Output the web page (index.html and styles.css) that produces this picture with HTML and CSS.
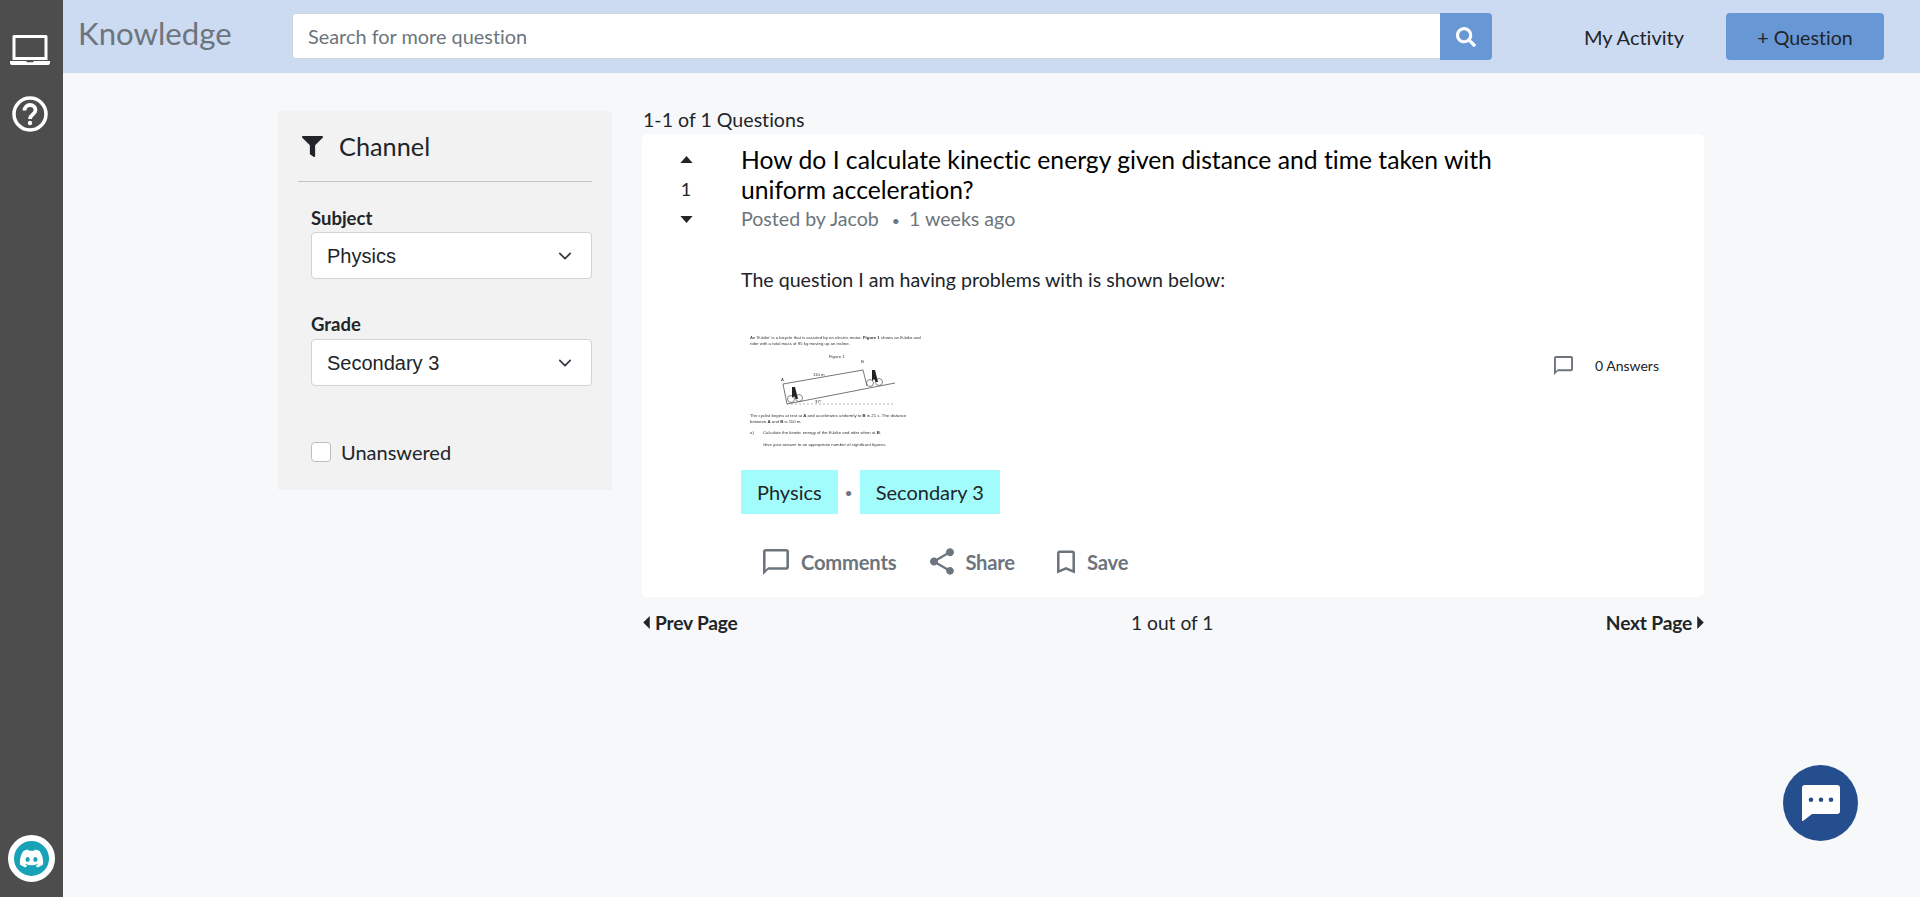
FILE: index.html
```html
<!DOCTYPE html>
<html lang="en">
<head>
<meta charset="utf-8">
<title>Knowledge</title>
<link rel="stylesheet" href="styles.css">
</head>
<body>
<div class="shell">
  <nav class="rail">
    <div class="rail-top">
      <svg class="rail-laptop" viewBox="0 0 40 30"><path fill="#fff" d="M4 0h32a1.500 1.500 0 0 1 1.500 1.500V25H2.500V1.500A1.500 1.500 0 0 1 4 0zm1.500 3v19h29V3zM0 26h16.500v1.200h7V26H40v2a2 2 0 0 1-2 2H2a2 2 0 0 1-2-2z"/></svg>
      <svg class="rail-help" viewBox="0 0 36 36"><circle cx="18" cy="18" r="16" fill="none" stroke="#fff" stroke-width="3.500"/><path fill="none" stroke="#fff" stroke-width="3.800" d="M12.500 14.500c0-3.300 2.400-5.500 5.500-5.500s5.500 2.200 5.500 5c0 4.600-5.500 4.400-5.500 9"/><circle cx="18" cy="27" r="2.200" fill="#fff"/></svg>
    </div>
    <div class="discord">
      <svg viewBox="-6 -6 36 36"><path fill="#fff" d="M20.317 4.3698a19.7913 19.7913 0 00-4.8851-1.5152.0741.0741 0 00-.0785.0371c-.211.3753-.4447.8648-.6083 1.2495-1.8447-.2762-3.68-.2762-5.4868 0-.1636-.3933-.4058-.8742-.6177-1.2495a.077.077 0 00-.0785-.037 19.7363 19.7363 0 00-4.8852 1.515.0699.0699 0 00-.0321.0277C.5334 9.0458-.319 13.5799.0992 18.0578a.0824.0824 0 00.0312.0561c2.0528 1.5076 4.0413 2.4228 5.9929 3.0294a.0777.0777 0 00.0842-.0276c.4616-.6304.8731-1.2952 1.226-1.9942a.076.076 0 00-.0416-.1057c-.6528-.2476-1.2743-.5495-1.8722-.8923a.077.077 0 01-.0076-.1277c.1258-.0943.2517-.1923.3718-.2914a.0743.0743 0 01.0776-.0105c3.9278 1.7933 8.18 1.7933 12.0614 0a.0739.0739 0 01.0785.0095c.1202.099.246.1981.3728.2924a.077.077 0 01-.0066.1276 12.2986 12.2986 0 01-1.873.8914.0766.0766 0 00-.0407.1067c.3604.698.7719 1.3628 1.225 1.9932a.076.076 0 00.0842.0286c1.961-.6067 3.9495-1.5219 6.0023-3.0294a.077.077 0 00.0313-.0552c.5004-5.177-.8382-9.6739-3.5485-13.6604a.061.061 0 00-.0312-.0286zM8.02 15.3312c-1.1825 0-2.1569-1.0857-2.1569-2.419 0-1.3332.9555-2.4189 2.157-2.4189 1.2108 0 2.1757 1.0952 2.1568 2.419 0 1.3332-.9555 2.4189-2.1569 2.4189zm7.9748 0c-1.1825 0-2.1569-1.0857-2.1569-2.419 0-1.3332.9554-2.4189 2.1569-2.4189 1.2108 0 2.1757 1.0952 2.1568 2.419 0 1.3332-.946 2.4189-2.1568 2.4189Z"/></svg>
    </div>
  </nav>
  <div class="page">
    <header class="topbar">
      <div class="brand">Knowledge</div>
      <form class="search">
        <input class="search-input" type="text" placeholder="Search for more question">
        <button class="search-btn" type="button"><svg viewBox="0 0 512 512"><path fill="#fff" d="M505 442.700L405.300 343c-4.500-4.500-10.600-7-17-7H372c27.600-35.300 44-79.700 44-128C416 93.100 322.900 0 208 0S0 93.100 0 208s93.100 208 208 208c48.300 0 92.700-16.400 128-44v16.300c0 6.400 2.500 12.500 7 17l99.700 99.700c9.400 9.400 24.600 9.400 33.900 0l28.300-28.300c9.400-9.400 9.400-24.600.1-34zM208 336c-70.700 0-128-57.200-128-128 0-70.700 57.200-128 128-128 70.700 0 128 57.200 128 128 0 70.700-57.200 128-128 128z"/></svg></button>
      </form>
      <a class="activity">My Activity</a>
      <a class="ask">+ Question</a>
    </header>
    <main class="content">
      <aside class="filters">
        <div class="filters-head">
          <svg viewBox="0 0 512 512"><path fill="#212529" d="M487.976 0H24.028C2.710 0-8.047 25.866 7.058 40.971L192 225.941V432c0 7.831 3.821 15.170 10.237 19.662l80 55.980C298.020 518.690 320 507.493 320 487.980V225.941l184.947-184.970C520.021 25.896 509.338 0 487.976 0z"/></svg>
          <span>Channel</span>
        </div>
        <div class="filters-body">
          <label class="field-label">Subject</label>
          <select class="field-select"><option>Physics</option></select>
          <label class="field-label field-gap">Grade</label>
          <select class="field-select"><option>Secondary 3</option></select>
          <label class="check"><input type="checkbox"><span>Unanswered</span></label>
        </div>
      </aside>
      <section class="results">
        <div class="count">1-1 of 1 Questions</div>
        <article class="card">
          <div class="votes">
            <svg viewBox="0 0 14 8"><path fill="#212529" d="M7 0l7 8H0z"/></svg>
            <span>1</span>
            <svg viewBox="0 0 14 8"><path fill="#212529" d="M7 8L0 0h14z"/></svg>
          </div>
          <div class="post">
            <h1 class="title">How do I calculate kinectic energy given distance and time taken with uniform acceleration?</h1>
            <div class="meta">Posted by Jacob <span class="dot">•</span> 1 weeks ago</div>
            <p class="body">The question I am having problems with is shown below:</p>
            <svg class="figure" viewBox="0 0 190 130">
              <g class="fig-text">
                <text x="9" y="14">An 'E-bike' is a bicycle that is assisted by an electric motor. <tspan font-weight="700">Figure 1</tspan> shows an E-bike and</text>
                <text x="9" y="20">rider with a total mass of 95 kg moving up an incline.</text>
                <text x="88" y="33" font-weight="700">Figure 1</text>
                <text x="72" y="51">110 m</text>
                <text x="74" y="78">37°</text>
                <text x="9" y="92">The cyclist begins at rest at <tspan font-weight="700">A</tspan> and accelerates uniformly to <tspan font-weight="700">B</tspan> in 21 s. The distance</text>
                <text x="9" y="98">between <tspan font-weight="700">A</tspan> and <tspan font-weight="700">B</tspan> is 110 m.</text>
                <text x="9" y="109">a)</text>
                <text x="22" y="109">Calculate the kinetic energy of the E-bike and rider when at <tspan font-weight="700">B</tspan>.</text>
                <text x="22" y="121">Give your answer to an appropriate number of significant figures.</text>
                <text x="40" y="56">A</text>
                <text x="120" y="38">B</text>
              </g>
              <path d="M42 59l80-14M42 59l4 20M122 45l4 16M46 79l108-21" fill="none" stroke="#666" stroke-width=".9"/>
              <path d="M46 79h108" fill="none" stroke="#999" stroke-width=".7" stroke-dasharray="2 2"/>
              <g fill="none" stroke="#555" stroke-width=".7"><circle cx="50" cy="74" r="3.500"/><circle cx="58" cy="73" r="3.500"/><circle cx="129" cy="58" r="3.500"/><circle cx="138" cy="57" r="3.500"/></g>
              <path fill="#222" d="M51 62h3l2 8 1 4h-2l-2-3-2 2zM131 45h3l2 8 1 4h-2l-2-3-2 2z"/>
            </svg>
            <div class="tags"><span class="tag">Physics</span><span class="tag-dot">•</span><span class="tag">Secondary 3</span></div>
            <div class="actions">
              <a class="action action-comments"><svg viewBox="2 2 20 20"><path d="M20 2H4c-1.100 0-2 .9-2 2v18l4-4h14c1.100 0 2-.9 2-2V4c0-1.100-.9-2-2-2zm0 14H6l-2 2V4h16v12z"/></svg>Comments</a>
              <a class="action action-share"><svg viewBox="3 2 18 20"><path d="M18 16.080c-.76 0-1.440.3-1.960.77L8.910 12.700c.05-.23.09-.46.09-.7s-.04-.47-.09-.7l7.050-4.110c.54.5 1.250.81 2.040.81 1.660 0 3-1.340 3-3s-1.340-3-3-3-3 1.340-3 3c0 .24.04.47.09.7L8.040 9.810C7.500 9.310 6.790 9 6 9c-1.660 0-3 1.340-3 3s1.340 3 3 3c.79 0 1.500-.31 2.040-.81l7.120 4.160c-.05.21-.08.43-.08.65 0 1.610 1.310 2.920 2.920 2.920s2.920-1.310 2.920-2.920-1.310-2.920-2.920-2.920z"/></svg>Share</a>
              <a class="action action-save"><svg viewBox="5 3 14 18"><path d="M17 3H7c-1.100 0-2 .9-2 2v16l7-3 7 3V5c0-1.100-.9-2-2-2zm0 15l-5-2.180L7 18V5h10v13z"/></svg>Save</a>
            </div>
          </div>
          <div class="answers">
            <svg viewBox="2 2 20 20"><path d="M20 2H4c-1.100 0-2 .9-2 2v18l4-4h14c1.100 0 2-.9 2-2V4c0-1.100-.9-2-2-2zm0 14H6l-2 2V4h16v12z"/></svg>
            <span>0 Answers</span>
          </div>
        </article>
        <div class="pager">
          <a class="pager-link"><svg viewBox="0 0 6 12"><path d="M6 0v12L0 6z"/></svg>Prev Page</a>
          <span class="pager-status">1 out of 1</span>
          <a class="pager-link">Next Page<svg viewBox="0 0 6 12"><path d="M0 0v12l6-6z"/></svg></a>
        </div>
      </section>
    </main>
  </div>
</div>
<button class="chat" type="button"><svg viewBox="0 0 38 36"><path fill="#fff" fill-rule="evenodd" d="M3 0h32a3 3 0 0 1 3 3v23a3 3 0 0 1-3 3H10l-9 7c-.5.3-1 0-1-.6V3a3 3 0 0 1 3-3zm6 12.500a2.300 2.300 0 1 0 0 4.600 2.300 2.300 0 0 0 0-4.600zm10 0a2.300 2.300 0 1 0 0 4.600 2.300 2.300 0 0 0 0-4.600zm10 0a2.300 2.300 0 1 0 0 4.600 2.300 2.300 0 0 0 0-4.600z"/></svg></button>
</body>
</html>
```
FILE: styles.css
```css
* { box-sizing: border-box; }
html, body { margin: 0; height: 100%; }
body { font-family: Lato, "Liberation Sans", sans-serif; font-size: 19.600px; font-variant-ligatures: none; color: #212529; background: #f7f8fa; overflow: hidden; }
a { color: inherit; text-decoration: none; }

.shell { display: flex; height: 897px; }

.rail { width: 63px; flex: none; background: #4d4d4d; display: flex; flex-direction: column; justify-content: space-between; align-items: center; padding: 35px 4px 15px 0; }
.rail-top { display: flex; flex-direction: column; align-items: center; gap: 31px; }
.rail-laptop { width: 40px; height: 30px; display: block; }
.rail-help { width: 36px; height: 36px; display: block; }
.discord { width: 47px; height: 47px; margin-left: 3px; border-radius: 50%; background: #17a2b8; border: 6px solid #fff; display: flex; }
.discord svg { width: 100%; height: 100%; }

.page { flex: 1; min-width: 0; }

.topbar { height: 73px; background: #ccdbf1; display: flex; align-items: flex-start; padding-left: 15px; }
.brand { width: 214px; flex: none; font-size: 31.200px; line-height: 36px; color: #6c757d; padding-top: 15px; }
.search { display: flex; width: 1200px; height: 47px; flex: none; margin-top: 13px; }
.search-input { flex: 1; min-width: 0; height: 46px; border: 1px solid #ced4da; border-right: 0; border-radius: 4px 0 0 4px; padding: 0 15px; font: 19.900px Lato, sans-serif; font-variant-ligatures: none; background: #fff; color: #495057; }
.search-input::placeholder { color: #6c757d; opacity: 1; }
.search-btn { width: 52px; flex: none; border: 0; padding: 0; border-radius: 0 4px 4px 0; background: #6897d6; display: flex; align-items: center; justify-content: center; }
.search-btn svg { width: 20px; height: 20px; }
.activity { margin-left: 92px; padding-top: 24px; line-height: 27px; font-size: 20px; }
.ask { margin-left: 42px; margin-top: 13px; width: 158px; height: 47px; background: #6897d6; border-radius: 4px; text-align: center; line-height: 49px; font-size: 19.600px; }

.content { display: flex; align-items: flex-start; gap: 31px; padding-left: 215px; }

.filters { width: 334px; flex: none; margin-top: 38px; background: #f2f2f2; height: 379px; padding: 0 20px; }
.filters-head { display: flex; align-items: center; height: 71px; border-bottom: 1px solid #c4c4c4; font-size: 25.300px; padding-left: 4px; gap: 16px; }
.filters-head svg { width: 21px; height: 21px; }
.filters-body { padding: 23px 0 0 13px; }
.field-label { display: block; font-weight: 700; font-size: 18.500px; line-height: 27px; }
.field-gap { margin-top: 32px; padding-bottom: 1px; line-height: 27px; }
.field-select { display: block; width: 100%; height: 47px; appearance: none; border: 1px solid #ced4da; border-radius: 4px; padding: 0 15px; font: 20px "Liberation Sans", sans-serif; color: #212529; background: #fff url("data:image/svg+xml,%3Csvg xmlns='http://www.w3.org/2000/svg' viewBox='0 0 16 16'%3E%3Cpath fill='none' stroke='%23343a40' stroke-linecap='round' stroke-linejoin='round' stroke-width='2' d='M2 5l6 6 6-6'/%3E%3C/svg%3E") no-repeat right 17px center / 18px 14px; }
.check { display: flex; align-items: center; gap: 10px; margin-top: 55px; line-height: 22px; font-size: 20px; }
.check input { appearance: none; width: 20px; height: 20px; margin: 0; background: #fff; border: 1px solid #b9bdc2; border-radius: 4px; }

.results { width: 1061px; flex: none; margin-top: 34px; }
.count { line-height: 26px; height: 27px; }
.card { background: #fff; border-radius: 5px; height: 463px; display: flex; margin-left: -1px; }
.votes { width: 99px; flex: none; display: flex; flex-direction: column; align-items: center; padding: 22px 11px 0 0; }
.votes svg { width: 13px; height: 7px; display: block; }
.votes span { margin: 11px 0 12px; line-height: 30px; font-size: 18px; }
.post { width: 760px; flex: none; padding-top: 11px; }
.title { margin: 0; width: 770px; font-size: 24.700px; line-height: 30px; font-weight: 400; color: #000; }
.meta { color: #6c757d; line-height: 30px; margin-top: -1px; }
.dot { margin: 0 4px 0 8px; font-size: 14px; }
.body { margin: 29px 0 0; line-height: 30px; }
.figure { display: block; width: 190px; height: 130px; margin-top: 30px; filter: blur(.35px); }
.fig-text text { font: 4.300px "Liberation Sans", sans-serif; fill: #333; }
.tags { display: flex; align-items: center; margin-top: 15px; }
.tag { background: #a2fcfc; height: 44px; line-height: 45px; padding: 0 16px; font-size: 20px; }
.tag-dot { width: 22px; text-align: center; color: #6c757d; font-size: 14px; }
.actions { display: flex; align-items: center; margin-top: 34px; padding-left: 22px; color: #6c757d; font-weight: 700; font-size: 20.200px; letter-spacing: -.2px; }
.action { display: flex; align-items: center; }
.action svg { fill: #6c757d; display: block; }
.action-comments svg { width: 26px; height: 26px; margin-right: 12px; }
.action-share { margin-left: 34px; }
.action-share svg { width: 24px; height: 27px; margin-right: 11px; }
.action-save { margin-left: 42px; }
.action-save svg { width: 18px; height: 24px; margin-right: 12px; }

.answers { display: flex; align-items: center; gap: 22px; margin: 221px 0 0 53px; height: 20px; font-size: 14px; white-space: nowrap; }
.answers svg { width: 19px; height: 19px; fill: #6c757d; }

.pager { display: flex; justify-content: space-between; align-items: center; height: 50px; }
.pager-link { display: flex; align-items: center; gap: 5px; font-weight: 700; font-size: 19.200px; letter-spacing: -.2px; }
.pager-link svg { width: 7px; height: 13px; fill: #212529; }
.pager-status { margin-left: 1px; font-size: 19.200px; }

.chat { position: fixed; left: 1783px; top: 765px; width: 75px; height: 76px; border: 0; padding: 0; border-radius: 50%; background: #254e8e; display: flex; align-items: center; justify-content: center; }
.chat svg { width: 38px; height: 36px; }
```
